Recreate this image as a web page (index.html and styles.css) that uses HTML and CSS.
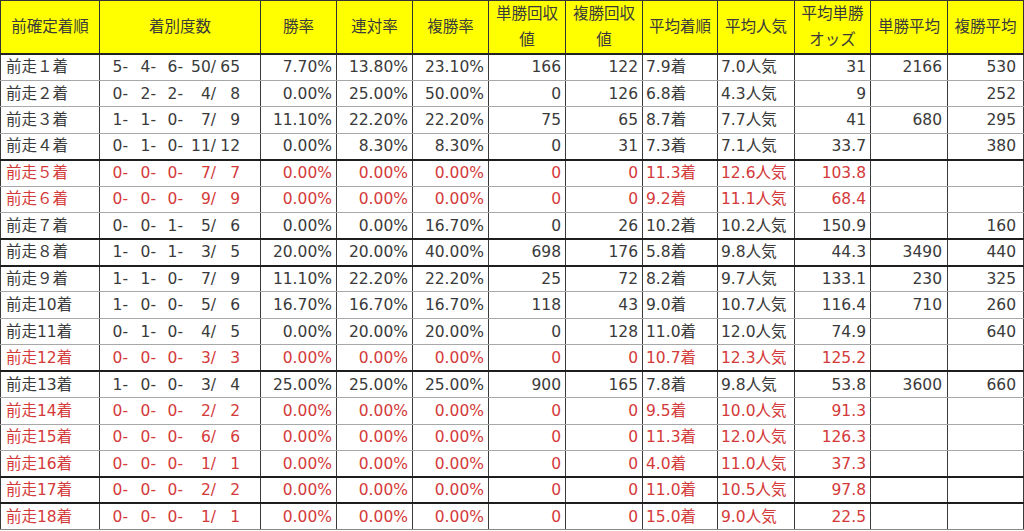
FILE: index.html
```html
<!DOCTYPE html>
<html lang="ja">
<head>
<meta charset="utf-8">
<title>前走着順別成績</title>
<link rel="stylesheet" href="styles.css">
</head>
<body>
<table class="stats">
<colgroup>
<col class="c1"><col class="c2"><col class="c3"><col class="c4"><col class="c5"><col class="c6"><col class="c7"><col class="c8"><col class="c9"><col class="c10"><col class="c11"><col class="c12">
</colgroup>
<thead>
<tr><th>前確定着順</th><th>着別度数</th><th>勝率</th><th>連対率</th><th>複勝率</th><th>単勝回収<br>値</th><th>複勝回収<br>値</th><th>平均着順</th><th>平均人気</th><th>平均単勝<br>オッズ</th><th>単勝平均</th><th>複勝平均</th></tr>
</thead>
<tbody>
<tr><td class="l">前走１着</td><td class="dist"><span class="d1">5-</span><span class="d2">4-</span><span class="d3">6-</span><span class="d4">50/</span><span class="d5">65</span></td><td>7.70%</td><td>13.80%</td><td>23.10%</td><td>166</td><td>122</td><td class="l">7.9着</td><td class="l">7.0人気</td><td>31</td><td class="t1">2166</td><td class="t2">530</td></tr>
<tr><td class="l">前走２着</td><td class="dist"><span class="d1">0-</span><span class="d2">2-</span><span class="d3">2-</span><span class="d4">4/</span><span class="d5">8</span></td><td>0.00%</td><td>25.00%</td><td>50.00%</td><td>0</td><td>126</td><td class="l">6.8着</td><td class="l">4.3人気</td><td>9</td><td class="t1"></td><td class="t2">252</td></tr>
<tr><td class="l">前走３着</td><td class="dist"><span class="d1">1-</span><span class="d2">1-</span><span class="d3">0-</span><span class="d4">7/</span><span class="d5">9</span></td><td>11.10%</td><td>22.20%</td><td>22.20%</td><td>75</td><td>65</td><td class="l">8.7着</td><td class="l">7.7人気</td><td>41</td><td class="t1">680</td><td class="t2">295</td></tr>
<tr><td class="l">前走４着</td><td class="dist"><span class="d1">0-</span><span class="d2">1-</span><span class="d3">0-</span><span class="d4">11/</span><span class="d5">12</span></td><td>0.00%</td><td>8.30%</td><td>8.30%</td><td>0</td><td>31</td><td class="l">7.3着</td><td class="l">7.1人気</td><td>33.7</td><td class="t1"></td><td class="t2">380</td></tr>
<tr class="red sep"><td class="l">前走５着</td><td class="dist"><span class="d1">0-</span><span class="d2">0-</span><span class="d3">0-</span><span class="d4">7/</span><span class="d5">7</span></td><td>0.00%</td><td>0.00%</td><td>0.00%</td><td>0</td><td>0</td><td class="l">11.3着</td><td class="l">12.6人気</td><td>103.8</td><td class="t1"></td><td class="t2"></td></tr>
<tr class="red"><td class="l">前走６着</td><td class="dist"><span class="d1">0-</span><span class="d2">0-</span><span class="d3">0-</span><span class="d4">9/</span><span class="d5">9</span></td><td>0.00%</td><td>0.00%</td><td>0.00%</td><td>0</td><td>0</td><td class="l">9.2着</td><td class="l">11.1人気</td><td>68.4</td><td class="t1"></td><td class="t2"></td></tr>
<tr><td class="l">前走７着</td><td class="dist"><span class="d1">0-</span><span class="d2">0-</span><span class="d3">1-</span><span class="d4">5/</span><span class="d5">6</span></td><td>0.00%</td><td>0.00%</td><td>16.70%</td><td>0</td><td>26</td><td class="l">10.2着</td><td class="l">10.2人気</td><td>150.9</td><td class="t1"></td><td class="t2">160</td></tr>
<tr class="sep"><td class="l">前走８着</td><td class="dist"><span class="d1">1-</span><span class="d2">0-</span><span class="d3">1-</span><span class="d4">3/</span><span class="d5">5</span></td><td>20.00%</td><td>20.00%</td><td>40.00%</td><td>698</td><td>176</td><td class="l">5.8着</td><td class="l">9.8人気</td><td>44.3</td><td class="t1">3490</td><td class="t2">440</td></tr>
<tr class="sep"><td class="l">前走９着</td><td class="dist"><span class="d1">1-</span><span class="d2">1-</span><span class="d3">0-</span><span class="d4">7/</span><span class="d5">9</span></td><td>11.10%</td><td>22.20%</td><td>22.20%</td><td>25</td><td>72</td><td class="l">8.2着</td><td class="l">9.7人気</td><td>133.1</td><td class="t1">230</td><td class="t2">325</td></tr>
<tr><td class="l">前走10着</td><td class="dist"><span class="d1">1-</span><span class="d2">0-</span><span class="d3">0-</span><span class="d4">5/</span><span class="d5">6</span></td><td>16.70%</td><td>16.70%</td><td>16.70%</td><td>118</td><td>43</td><td class="l">9.0着</td><td class="l">10.7人気</td><td>116.4</td><td class="t1">710</td><td class="t2">260</td></tr>
<tr><td class="l">前走11着</td><td class="dist"><span class="d1">0-</span><span class="d2">1-</span><span class="d3">0-</span><span class="d4">4/</span><span class="d5">5</span></td><td>0.00%</td><td>20.00%</td><td>20.00%</td><td>0</td><td>128</td><td class="l">11.0着</td><td class="l">12.0人気</td><td>74.9</td><td class="t1"></td><td class="t2">640</td></tr>
<tr class="red"><td class="l">前走12着</td><td class="dist"><span class="d1">0-</span><span class="d2">0-</span><span class="d3">0-</span><span class="d4">3/</span><span class="d5">3</span></td><td>0.00%</td><td>0.00%</td><td>0.00%</td><td>0</td><td>0</td><td class="l">10.7着</td><td class="l">12.3人気</td><td>125.2</td><td class="t1"></td><td class="t2"></td></tr>
<tr class="sep"><td class="l">前走13着</td><td class="dist"><span class="d1">1-</span><span class="d2">0-</span><span class="d3">0-</span><span class="d4">3/</span><span class="d5">4</span></td><td>25.00%</td><td>25.00%</td><td>25.00%</td><td>900</td><td>165</td><td class="l">7.8着</td><td class="l">9.8人気</td><td>53.8</td><td class="t1">3600</td><td class="t2">660</td></tr>
<tr class="red"><td class="l">前走14着</td><td class="dist"><span class="d1">0-</span><span class="d2">0-</span><span class="d3">0-</span><span class="d4">2/</span><span class="d5">2</span></td><td>0.00%</td><td>0.00%</td><td>0.00%</td><td>0</td><td>0</td><td class="l">9.5着</td><td class="l">10.0人気</td><td>91.3</td><td class="t1"></td><td class="t2"></td></tr>
<tr class="red"><td class="l">前走15着</td><td class="dist"><span class="d1">0-</span><span class="d2">0-</span><span class="d3">0-</span><span class="d4">6/</span><span class="d5">6</span></td><td>0.00%</td><td>0.00%</td><td>0.00%</td><td>0</td><td>0</td><td class="l">11.3着</td><td class="l">12.0人気</td><td>126.3</td><td class="t1"></td><td class="t2"></td></tr>
<tr class="red"><td class="l">前走16着</td><td class="dist"><span class="d1">0-</span><span class="d2">0-</span><span class="d3">0-</span><span class="d4">1/</span><span class="d5">1</span></td><td>0.00%</td><td>0.00%</td><td>0.00%</td><td>0</td><td>0</td><td class="l">4.0着</td><td class="l">11.0人気</td><td>37.3</td><td class="t1"></td><td class="t2"></td></tr>
<tr class="red sep"><td class="l">前走17着</td><td class="dist"><span class="d1">0-</span><span class="d2">0-</span><span class="d3">0-</span><span class="d4">2/</span><span class="d5">2</span></td><td>0.00%</td><td>0.00%</td><td>0.00%</td><td>0</td><td>0</td><td class="l">11.0着</td><td class="l">10.5人気</td><td>97.8</td><td class="t1"></td><td class="t2"></td></tr>
<tr class="red sep"><td class="l">前走18着</td><td class="dist"><span class="d1">0-</span><span class="d2">0-</span><span class="d3">0-</span><span class="d4">1/</span><span class="d5">1</span></td><td>0.00%</td><td>0.00%</td><td>0.00%</td><td>0</td><td>0</td><td class="l">15.0着</td><td class="l">9.0人気</td><td>22.5</td><td class="t1"></td><td class="t2"></td></tr>
</tbody>
</table>
</body>
</html>
```

FILE: styles.css
```css
html, body {
  margin: 0;
  padding: 0;
  background: #ffffff;
}

.stats {
  border-collapse: collapse;
  table-layout: fixed;
  width: 1023px;
  font-family: "DejaVu Sans", "Noto Sans CJK JP", sans-serif;
  font-size: 15.5px;
  color: #3a3a3a;
}

.c1 { width: 99px; }
.c2 { width: 161px; }
.c3 { width: 76px; }
.c4 { width: 76px; }
.c5 { width: 76px; }
.c6 { width: 77px; }
.c7 { width: 77px; }
.c8 { width: 75px; }
.c9 { width: 77px; }
.c10 { width: 76px; }
.c11 { width: 77px; }
.c12 { width: 76px; }

.stats th {
  background: #ffff00;
  font-weight: normal;
  border: 1px solid #333333;
  height: 50px;
  line-height: 26px;
  padding: 0;
  text-align: center;
  vertical-align: middle;
  white-space: nowrap;
}

.stats thead tr {
  border-bottom: 2px solid #222222;
}

.stats tbody tr {
  height: 26.45px;
}

.stats td {
  border-left: 1px solid #3a3a3a;
  border-right: 1px solid #3a3a3a;
  border-top: 1px solid #a8a8a8;
  border-bottom: 1px solid #a8a8a8;
  padding: 0 4px 0 4px;
  line-height: 24px;
  text-align: right;
  vertical-align: middle;
  white-space: nowrap;
  overflow: hidden;
}

.stats td.l {
  text-align: left;
  padding-left: 3px;
}

.stats td:first-child.l {
  padding-left: 5px;
}

.stats td.t1 {
  padding-right: 5px;
}

.stats td.t2 {
  padding-right: 7px;
}

.stats td.dist {
  text-align: left;
  padding: 0;
}

.dist span {
  display: inline-block;
  text-align: right;
}

.dist .d1 { width: 28px; }
.dist .d2 { width: 28px; }
.dist .d3 { width: 27px; }
.dist .d4 { width: 33px; }
.dist .d5 { width: 24px; }

.stats tr.sep td {
  border-top: 2px solid #1e1e1e;
}

.stats tr.red td {
  color: #d43a3a;
}

.stats tbody tr:last-child td {
  border-bottom: 1px solid #888888;
}
```
